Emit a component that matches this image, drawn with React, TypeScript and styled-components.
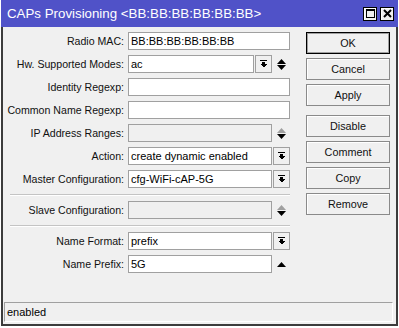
import React from 'react';
import styled, { createGlobalStyle } from 'styled-components';

const GlobalStyle = createGlobalStyle`
  html, body { margin: 0; padding: 0; background: #ffffff; }
  body { font-family: "Liberation Sans", Arial, sans-serif; font-size: 11px; color: #000; }
`;

const Window = styled.div`
  margin-left: 1px;
  width: 397px;
  height: 326px;
  display: flex;
  flex-direction: column;
`;

const TitleBar = styled.div`
  height: 27px;
  flex-shrink: 0;
  background: #5052c8;
  display: flex;
  align-items: center;
  padding: 0 4px 0 6px;
`;

const Title = styled.div`
  flex: 1;
  color: #ffffff;
  font-size: 13.3px;
  white-space: nowrap;
`;

const TitleButtons = styled.div`
  display: flex;
  gap: 3px;
`;

const TitleButton = styled.div`
  width: 14px;
  height: 14px;
  box-sizing: border-box;
  border: 1px solid #000;
  background: #f0f0f0;
  box-shadow: inset 1px 1px #fff;
  display: flex;
  align-items: center;
  justify-content: center;
`;

const Body = styled.div`
  flex: 1;
  min-height: 0;
  display: flex;
  flex-direction: column;
  background: #f0f0f0;
  border: 2px solid #3c3c3c;
  border-top: none;
`;

const Main = styled.div`
  display: flex;
  gap: 16px;
  padding: 5px 5px 0 7px;
`;

const Form = styled.div`
  display: grid;
  grid-template-columns: 114px 162px;
  column-gap: 4px;
  row-gap: 5px;
  align-content: start;
`;

const Label = styled.div`
  height: 18px;
  display: flex;
  align-items: center;
  justify-content: flex-end;
  white-space: nowrap;
  font-size: 10.6px;
  color: #111;
`;

const Field = styled.div`
  height: 18px;
  display: flex;
  gap: 1px;
`;

const TextBox = styled.div<{ $disabled?: boolean }>`
  flex: 1;
  min-width: 0;
  box-sizing: border-box;
  height: 18px;
  border: 1px solid #a0a0a0;
  background: ${(p) => (p.$disabled ? '#f0f0f0' : '#ffffff')};
  padding: 0 2px;
  display: flex;
  align-items: center;
  white-space: nowrap;
  overflow: hidden;
`;

const DropButton = styled.div`
  width: 17px;
  flex-shrink: 0;
  box-sizing: border-box;
  height: 18px;
  border: 1px solid #a0a0a0;
  background: #f0f0f0;
  display: flex;
  align-items: center;
  justify-content: center;
`;

const ArrowCell = styled.div`
  width: 17px;
  flex-shrink: 0;
  display: flex;
  flex-direction: column;
  align-items: center;
  justify-content: center;
  gap: 1px;
`;

const Separator = styled.div`
  grid-column: 1 / -1;
  box-sizing: border-box;
  border-top: 1px solid #c4c4c4;
  border-bottom: 1px solid #ffffff;
  margin-top: 1px;
  height: 2px;
`;

const ButtonColumn = styled.div`
  width: 84px;
  display: flex;
  flex-direction: column;
  gap: 4px;
`;

const Button = styled.div<{ $default?: boolean; $gapBefore?: boolean }>`
  height: 22px;
  box-sizing: border-box;
  border: 1px solid ${(p) => (p.$default ? '#000000' : '#8a8a8a')};
  box-shadow: ${(p) => (p.$default ? 'inset 0 0 0 1px #a0a0a0' : 'inset 1px 1px #ffffff')};
  background: #f0f0f0;
  display: flex;
  align-items: center;
  justify-content: center;
  font-size: 10.8px;
  color: #111;
  margin-top: ${(p) => (p.$gapBefore ? '5px' : '0')};
`;

const StatusBar = styled.div`
  margin: auto 3px 2px 1px;
  height: 20px;
  box-sizing: border-box;
  border: 1px solid;
  border-color: #a0a0a0 #ffffff #ffffff #a0a0a0;
  padding-left: 2px;
  display: flex;
  align-items: center;
`;

const DropIcon = () => (
  <svg width="7" height="8" viewBox="0 0 7 8" shapeRendering="crispEdges">
    <rect x="0" y="0" width="7" height="1" fill="#000" />
    <rect x="2" y="2" width="3" height="2" fill="#000" />
    <polygon points="0,4 7,4 3.5,7.5" fill="#000" />
  </svg>
);

const UpTri = ({ color = '#000' }: { color?: string }) => (
  <svg width="9" height="5" viewBox="0 0 9 5">
    <polygon points="4.5,0 9,5 0,5" fill={color} />
  </svg>
);

const DownTri = ({ color = '#000' }: { color?: string }) => (
  <svg width="9" height="5" viewBox="0 0 9 5">
    <polygon points="0,0 9,0 4.5,5" fill={color} />
  </svg>
);

const MaxIcon = () => (
  <svg width="9" height="9" viewBox="0 0 9 9" shapeRendering="crispEdges">
    <rect x="0.5" y="0.5" width="8" height="8" fill="none" stroke="#000" />
    <rect x="0" y="0" width="9" height="2" fill="#000" />
  </svg>
);

const CloseIcon = () => (
  <svg width="9" height="9" viewBox="0 0 9 9">
    <path d="M1 1 L8 8 M8 1 L1 8" stroke="#000" strokeWidth="2" />
  </svg>
);

type Row =
  | { kind: 'sep' }
  | {
      kind: 'row';
      label: string;
      value?: string;
      disabled?: boolean;
      drop?: boolean;
      arrows?: 'both' | 'grayUp' | 'up';
    };

const rows: Row[] = [
  { kind: 'row', label: 'Radio MAC:', value: 'BB:BB:BB:BB:BB:BB' },
  { kind: 'row', label: 'Hw. Supported Modes:', value: 'ac', drop: true, arrows: 'both' },
  { kind: 'row', label: 'Identity Regexp:' },
  { kind: 'row', label: 'Common Name Regexp:' },
  { kind: 'row', label: 'IP Address Ranges:', disabled: true, arrows: 'grayUp' },
  { kind: 'row', label: 'Action:', value: 'create dynamic enabled', drop: true },
  { kind: 'row', label: 'Master Configuration:', value: 'cfg-WiFi-cAP-5G', drop: true },
  { kind: 'sep' },
  { kind: 'row', label: 'Slave Configuration:', disabled: true, arrows: 'grayUp' },
  { kind: 'sep' },
  { kind: 'row', label: 'Name Format:', value: 'prefix', drop: true },
  { kind: 'row', label: 'Name Prefix:', value: '5G', arrows: 'up' },
];

const buttons = ['OK', 'Cancel', 'Apply', 'Disable', 'Comment', 'Copy', 'Remove'];

export default function App() {
  return (
    <>
      <GlobalStyle />
      <Window>
        <TitleBar>
          <Title>CAPs Provisioning &lt;BB:BB:BB:BB:BB:BB&gt;</Title>
          <TitleButtons>
            <TitleButton>
              <MaxIcon />
            </TitleButton>
            <TitleButton>
              <CloseIcon />
            </TitleButton>
          </TitleButtons>
        </TitleBar>
        <Body>
          <Main>
            <Form>
              {rows.map((r, i) =>
                r.kind === 'sep' ? (
                  <Separator key={i} />
                ) : (
                  <React.Fragment key={i}>
                    <Label>{r.label}</Label>
                    <Field>
                      <TextBox $disabled={r.disabled}>{r.value ?? ''}</TextBox>
                      {r.drop && (
                        <DropButton>
                          <DropIcon />
                        </DropButton>
                      )}
                      {r.arrows && (
                        <ArrowCell>
                          {r.arrows === 'both' && (
                            <>
                              <UpTri />
                              <DownTri />
                            </>
                          )}
                          {r.arrows === 'grayUp' && (
                            <>
                              <UpTri color="#a0a0a0" />
                              <DownTri />
                            </>
                          )}
                          {r.arrows === 'up' && <UpTri />}
                        </ArrowCell>
                      )}
                    </Field>
                  </React.Fragment>
                )
              )}
            </Form>
            <ButtonColumn>
              {buttons.map((b, i) => (
                <Button key={b} $default={i === 0} $gapBefore={b === 'Disable'}>
                  {b}
                </Button>
              ))}
            </ButtonColumn>
          </Main>
          <StatusBar>enabled</StatusBar>
        </Body>
      </Window>
    </>
  );
}
